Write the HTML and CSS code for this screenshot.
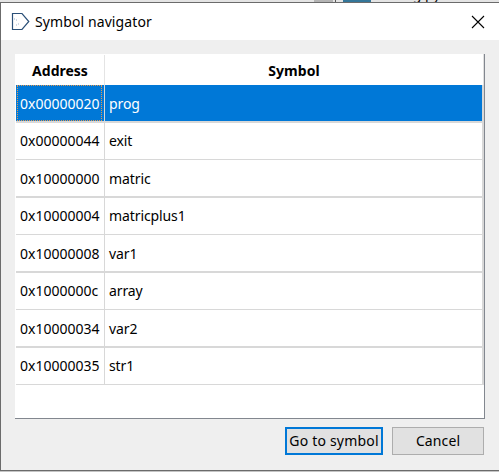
FILE: index.html
```html
<!DOCTYPE html>
<html lang="en">
<head>
<meta charset="utf-8">
<title>Symbol navigator</title>
<link rel="stylesheet" href="styles.css">
</head>
<body>
<div class="backdrop"><span class="chip"></span><span class="divider"></span><span class="tab"></span><span class="behind">ng.py</span></div>
<main class="dialog">
  <header class="titlebar">
    <svg class="logo" width="19" height="19" viewBox="0 0 19 19"><path d="M1.5 1.5H11L17.8 9.5L11 17.5H1.5Z" fill="#fff" stroke="#2b5078" stroke-width="1.2"/><path d="M3 7h1M5 8h1M5 13h1M7 12h1" stroke="#9fb2cc"/></svg>
    <h1 class="title">Symbol navigator</h1>
    <svg class="close" width="14" height="14" viewBox="0 0 14 14"><path d="M1 1L13 13M13 1L1 13" stroke="#000" stroke-width="1.1"/></svg>
  </header>
  <section class="table">
    <div class="head"><span class="addr">Address</span><span class="name">Symbol</span></div>
    <div class="row selected"><span class="addr">0x00000020</span><span class="name">prog</span></div>
    <div class="row"><span class="addr">0x00000044</span><span class="name">exit</span></div>
    <div class="row"><span class="addr">0x10000000</span><span class="name">matric</span></div>
    <div class="row"><span class="addr">0x10000004</span><span class="name">matricplus1</span></div>
    <div class="row"><span class="addr">0x10000008</span><span class="name">var1</span></div>
    <div class="row"><span class="addr">0x1000000c</span><span class="name">array</span></div>
    <div class="row"><span class="addr">0x10000034</span><span class="name">var2</span></div>
    <div class="row"><span class="addr">0x10000035</span><span class="name">str1</span></div>
  </section>
  <footer class="actions"><button class="btn primary">Go to symbol</button><button class="btn">Cancel</button></footer>
</main>
</body>
</html>
```
FILE: styles.css
```css
* { box-sizing: border-box; }
body { margin: 0; width: 499px; height: 472px; overflow: hidden; background: #c4c4c4; font: 14px/20px "Noto Sans", "Open Sans", sans-serif; color: #000; }
.backdrop { height: 2px; display: flex; overflow: hidden; background: #e4e4e4; padding-left: 314px; }
.chip { width: 19px; background: #b4b4b4; }
.divider { width: 1px; margin: 0 7px 0 2px; background: #555; }
.tab { width: 28px; background: #347699; }
.behind { margin: -16px 0 0 33px; font-size: 14px; }
.dialog { width: 499px; height: 469px; border: 1px solid #6b6b6b; border-right: 0; background: #efefef; }
.titlebar { height: 37px; display: flex; align-items: center; background: #fff; padding: 0 14px 0 10px; }
.logo { margin-top: -1px; }
.title { margin: 0 0 0 5px; font-size: 14px; font-weight: 400; letter-spacing: 0.1px; flex: 1; }
.table { margin: 14px 14px 0; width: 470px; height: 365px; background: #fff; border-right: 1px solid #82878f; border-bottom: 1px solid #82878f; padding-left: 1px; }
.head { height: 31px; padding-top: 1px; display: flex; font-weight: 700; text-align: center; line-height: 32px; border-right: 1px solid #e0e0e0; }
.head .addr { padding: 0; border-color: #e4e4e4; }
.head .name { padding: 0; letter-spacing: 0.1px; }
.row { display: flex; height: 38px; line-height: 37px; border-bottom: 2px solid #d8d8d8; border-right: 2px solid #d8d8d8; }
.row:nth-child(odd) { height: 37px; line-height: 35px; border-bottom-width: 1px; }
.addr { width: 89px; padding-left: 4px; border-right: 1px solid #d8d8d8; }
.name { flex: 1; padding-left: 4px; letter-spacing: -0.1px; }
.selected { background: #0078d7; color: #fff; background-clip: padding-box; }
.selected .addr { position: relative; }
.selected .addr::after { content: ""; position: absolute; inset: 0 2px 0 1px; border: 1px dotted #e39850; }
.actions { display: flex; justify-content: flex-end; gap: 9px; padding: 8px 15px 0 0; }
.btn { width: 92px; height: 28px; padding: 0; border: 1px solid #adadad; border-radius: 0; background: #e1e1e1; color: #000; font: inherit; letter-spacing: 0.1px; white-space: nowrap; }
.primary { width: 98px; border: 2px solid #0078d7; letter-spacing: 0.2px; }
```
